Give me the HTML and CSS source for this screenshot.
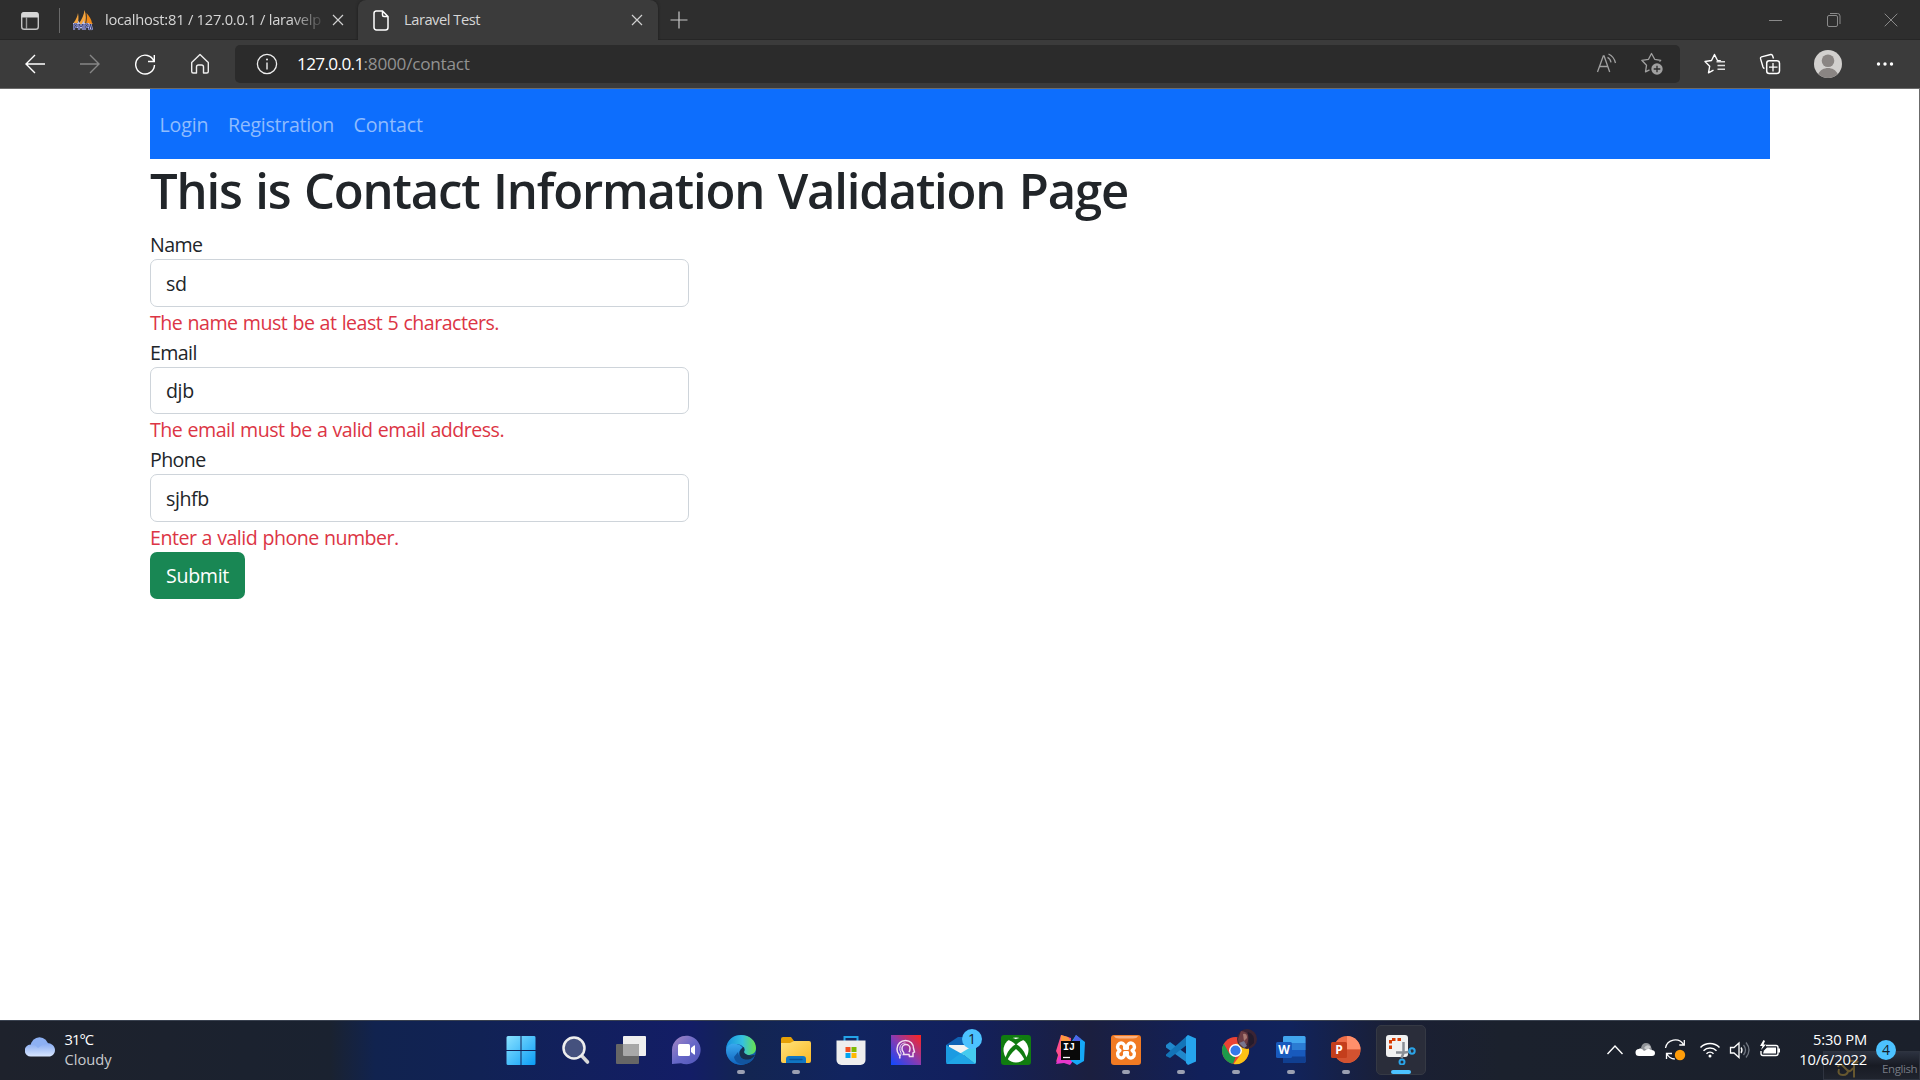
FILE: index.html
```html
<!DOCTYPE html>
<html lang="en">
<head>
<meta charset="utf-8">
<title>Laravel Test</title>
<link rel="stylesheet" href="styles.css">
</head>
<body>
<header class="tabs">
  <div class="tab-menu"><svg width="20" height="20" viewBox="0 0 20 20"><rect x="1.7" y="1.7" width="16.6" height="16.6" rx="2.6" fill="none" stroke="#c4c4c4" stroke-width="1.4"/><path d="M1.5 6.5V4a3 3 0 0 1 3-3h11a3 3 0 0 1 3 3v2.500z" fill="#d6d6d6"/><path d="M6.500 6v12" stroke="#9a9a9a" stroke-width="1.400"/></svg></div>
  <div class="tab tab-idle">
    <svg class="favicon" width="20" height="21" viewBox="0 0 20 21"><path d="M0.500 13C3 10 4.500 6 5 3c.8 4 .6 8-.6 11zM5.500 14C9 9 11 5 11.500 0c2 5 1.500 10 .5 14z" fill="#f5a43c"/><path d="M13 14c1-4 1-8 .5-11 3 3 5 7 5.500 10l1 1z" fill="#f08a18"/><path d="M1 20v-6h3v3H1M6 20v-6l2 3 2-3v6M12 20v-6h3v3h-3M16 20l1.500-6 1.500 6" fill="none" stroke="#bcc0e8" stroke-width="2.200"/><path d="M1 20v-6h3v3H1M6 20v-6l2 3 2-3v6M12 20v-6h3v3h-3M16 20l1.500-6 1.500 6" fill="none" stroke="#303878"/></svg>
    <span class="tab-title faded">localhost:81 / 127.0.0.1 / laravelp</span>
    <svg class="close" width="12" height="12" viewBox="0 0 12 12"><path d="M1 1l10 10M11 1L1 11" stroke="#d0d0d0" stroke-width="1.200"/></svg>
  </div>
  <div class="tab tab-active">
    <svg class="page-icon" width="16" height="21" viewBox="0 0 16 21"><path d="M3 1h6.500L15 6.500V17.500a2.500 2.500 0 0 1-2.500 2.500H3.500A2.500 2.500 0 0 1 1 17.500V3.500A2.500 2.500 0 0 1 3 1zM9.500 1v4a1.500 1.500 0 0 0 1.500 1.500h4" fill="none" stroke="#fff" stroke-width="1.500"/></svg>
    <span class="tab-title active-title">Laravel Test</span>
    <svg class="close" width="12" height="12" viewBox="0 0 12 12"><path d="M1 1l10 10M11 1L1 11" stroke="#d0d0d0" stroke-width="1.200"/></svg>
  </div>
  <svg class="new-tab" width="18" height="18" viewBox="0 0 18 18"><path d="M9 .5v17M.5 9h17" stroke="#c8c8c8" stroke-width="1.200"/></svg>
  <div class="window-controls">
    <svg width="14" height="14" viewBox="0 0 14 14"><path d="M0 7.500h13" stroke="#8a8a8a"/></svg>
    <svg width="14" height="14" viewBox="0 0 14 14"><rect x=".5" y="2.500" width="10" height="11" rx="1.500" fill="none" stroke="#8a8a8a"/><path d="M3 .5h7.500a2.500 2.500 0 0 1 2.500 2.500v8" fill="none" stroke="#8a8a8a"/></svg>
    <svg width="14" height="14" viewBox="0 0 14 14"><path d="M.7.700l12.600 12.600M13.300.700L.7 13.300" stroke="#8a8a8a"/></svg>
  </div>
</header>
<div class="toolbar">
  <div class="nav-buttons">
    <svg width="22" height="22" viewBox="0 0 22 22"><path d="M21 11H2M11 2l-9 9 9 9" fill="none" stroke="#fff" stroke-width="1.400"/></svg>
    <svg width="22" height="22" viewBox="0 0 22 22"><path d="M1 11h19M11 2l9 9-9 9" fill="none" stroke="#868686" stroke-width="1.400"/></svg>
    <svg width="22" height="22" viewBox="0 0 22 22"><path d="M20 8.500A9.400 9.400 0 1 0 20.500 12M20.300 2v6.500H14" fill="none" stroke="#fff" stroke-width="1.400"/></svg>
    <svg width="22" height="22" viewBox="0 0 22 22"><path d="M2.700 9.500L11 1.500l8.300 8V18.500a1.500 1.500 0 0 1-1.500 1.500H14.500v-6a2 2 0 0 0-2-2h-3a2 2 0 0 0-2 2v6H4.200a1.500 1.500 0 0 1-1.500-1.500z" fill="none" stroke="#eee" stroke-width="1.400" stroke-linejoin="round"/></svg>
  </div>
  <div class="address">
    <svg width="22" height="22" viewBox="0 0 22 22"><circle cx="11" cy="11" r="9.600" fill="none" stroke="#eee" stroke-width="1.300"/><path d="M11 9.500v7" stroke="#eee" stroke-width="1.400"/><circle cx="11" cy="6.500" r="1" fill="#eee"/></svg>
    <span class="url"><span class="host">127.0.0.1</span><span class="path">:8000/contact</span></span>
    <svg class="read" width="22" height="22" viewBox="0 0 22 22"><path d="M1.500 19L7.300 3h.8l5.600 16M3.500 13.500h8.300" fill="none" stroke="#a0a0a0" stroke-width="1.300"/><path d="M11.500 4.300q3 1.500 3.500 5M12.500 1q5.500 2.500 7 9" fill="none" stroke="#a0a0a0" stroke-width="1.300"/></svg>
    <svg class="star-add" width="24" height="24" viewBox="0 0 24 24"><path d="M19.500 9.500l1.200-1.200-6-1L11.500 1.500 8.500 7.300l-6.700 1 4.700 5-1 6.500 4-2" fill="none" stroke="#a0a0a0" stroke-width="1.300" stroke-linejoin="round"/><circle cx="17" cy="17" r="5.700" fill="#a0a0a0"/><path d="M17 13.700v6.600M13.700 17h6.600" stroke="#2b2b2b" stroke-width="1.300"/></svg>
  </div>
  <div class="tools">
    <svg width="22" height="22" viewBox="0 0 22 22"><path d="M17 8l-3.500-.5-3-6-3 6-6.500 1 4.700 4.700-1.200 6.600 5-2.700" fill="none" stroke="#fff" stroke-width="1.400" stroke-linejoin="round"/><path d="M12.500 8.800H21M13.500 12.500H21M13.500 16.200H21" stroke="#ddd" stroke-width="1.400"/></svg>
    <svg width="22" height="22" viewBox="0 0 22 22"><path d="M14.500 5.500L13.500 2.500a1.500 1.500 0 0 0-1.800-1L2.500 3.800a1.500 1.500 0 0 0-1 1.800L4 14a2.500 2.500 0 0 0 1.500 1.500" fill="none" stroke="#fff" stroke-width="1.400"/><rect x="7.700" y="7.700" width="12.800" height="12.800" rx="2.500" fill="none" stroke="#fff" stroke-width="1.500"/><path d="M14 10v8.500M10 14.200h8.500" stroke="#fff" stroke-width="1.300"/></svg>
    <svg class="avatar" width="28" height="28" viewBox="0 0 28 28"><circle cx="14" cy="14" r="14" fill="#d2d0ce"/><circle cx="14" cy="10.700" r="6.300" fill="#8a8583"/><path d="M4.300 24C6 20 10 18 14 18s8 2 9.700 6a14 14 0 0 1-19.400 0z" fill="#8a8583"/></svg>
    <svg width="22" height="22" viewBox="0 0 22 22"><g fill="#fff"><circle cx="4.500" cy="11" r="1.700"/><circle cx="11" cy="11" r="1.700"/><circle cx="17.500" cy="11" r="1.700"/></g></svg>
  </div>
</div>
<main class="page">
  <div class="container">
    <nav class="navbar"><a class="login">Login</a><a class="registration">Registration</a><a class="contact">Contact</a></nav>
    <h1>This is Contact Information Validation Page</h1>
    <form>
      <label>Name</label>
      <input type="text" value="sd">
      <p class="error">The name must be at least 5 characters.</p>
      <label>Email</label>
      <input type="text" value="djb">
      <p class="error">The email must be a valid email address.</p>
      <label>Phone</label>
      <input type="text" value="sjhfb">
      <p class="error">Enter a valid phone number.</p>
      <button type="button">Submit</button>
    </form>
  </div>
</main>
<footer class="taskbar">
  <div class="weather">
    <svg width="30" height="20" viewBox="0 0 30 20"><defs><linearGradient id="cl" x1="0" y1="0" x2="0" y2="1"><stop offset="0" stop-color="#86aaf0"/><stop offset="1" stop-color="#d8e6ff"/></linearGradient></defs><circle cx="14.500" cy="9" r="8.700" fill="#8db0f2"/><path d="M6 19.500a6 6 0 0 1-.5-12C9 7 11 9 13 11l4-3c5-4.500 13-1 13 5 0 4-3 6.500-6 6.500z" fill="url(#cl)"/></svg>
    <div class="weather-text"><span class="temp">31°C</span><span class="sky">Cloudy</span></div>
  </div>
  <div class="apps">
    <div class="app"><svg viewBox="0 0 30 30"><defs><linearGradient id="wn" x1="0" y1="0" x2="1" y2="1"><stop offset="0" stop-color="#8ae2ff"/><stop offset="1" stop-color="#0a9cf6"/></linearGradient></defs><path d="M2 1h12.500v14H.5V2.500A1.500 1.500 0 0 1 2 1zM15.500 1H28a1.500 1.500 0 0 1 1.500 1.500V15h-14zM.5 16h14v14H2a1.500 1.500 0 0 1-1.500-1.500zM15.500 16h14v12.500A1.500 1.500 0 0 1 28 30H15.500z" fill="url(#wn)"/></svg></div>
    <div class="app"><svg viewBox="0 0 30 30"><path d="M20 20l6.500 7" stroke="#d8d8d8" stroke-width="3.600" stroke-linecap="round"/><circle cx="13" cy="13" r="10.500" fill="#45517e" stroke="#eee" stroke-width="2.500"/></svg></div>
    <div class="app"><svg viewBox="0 0 30 30"><rect x="7" y="1" width="23" height="20" rx="1" fill="#efefef"/><rect y="9" width="23" height="20" rx="1" fill="#666"/><path d="M7 9h15a1 1 0 0 1 1 1v11H8a1 1 0 0 1-1-1z" fill="#a8a8a8"/></svg></div>
    <div class="app"><svg viewBox="0 0 30 30"><defs><linearGradient id="ch" x1="0" y1="0" x2="1" y2="1"><stop offset="0" stop-color="#a887c2"/><stop offset=".5" stop-color="#6768c8"/><stop offset="1" stop-color="#5054b8"/></linearGradient></defs><path d="M1 29V15A14.300 14.300 0 1 1 10 28.300z" fill="url(#ch)"/><rect x="7" y="9" width="12" height="12" rx="1.500" fill="#fff"/><path d="M20 13l3-2.500q1-.5 1 .5v8q0 1-1 .5L20 17z" fill="#fff"/></svg></div>
    <div class="app run"><svg viewBox="0 0 30 30"><defs><linearGradient id="eg"><stop offset="0" stop-color="#1791e0"/><stop offset=".55" stop-color="#35c1e0"/><stop offset="1" stop-color="#68e34b"/></linearGradient><linearGradient id="eb" x1="0" y1="0" x2="0" y2="1"><stop offset="0" stop-color="#39a8ee"/><stop offset="1" stop-color="#1065c0"/></linearGradient></defs><circle cx="15" cy="15" r="15" fill="#115ba8"/><path d="M0 14C1 4 8 0 15 0c9 0 15 6 15 13 0 5-4 7-8 7-3 0-5-1-4-3 2-4-2-8-8-8-5 0-9 3-10 5z" fill="url(#eg)"/><path d="M0 15c1-5 5-7 9-6 5 0 8 3 7 5-5 1-5 13 3 15C8 32 0 24 0 15z" fill="url(#eb)"/><path d="M18 12c-6 2-6 11 1 13 4 1 8-2 10-5l-1 0c-3 1-9 0-10-3q1-2 0-5z" fill="#17304f"/><path d="M12 17c0 6 7 10 16 6-5 8-18 9-20-1z" fill="#12559f"/></svg></div>
    <div class="app run"><svg viewBox="0 0 30 30"><defs><linearGradient id="fo" x1="0" y1="0" x2="1" y2="1"><stop offset="0" stop-color="#ffe27c"/><stop offset="1" stop-color="#fbb924"/></linearGradient></defs><path d="M0 8V4a2 2 0 0 1 2-2h8l3 4v3z" fill="#e5a007"/><path d="M0 8h9l4-2h15a2 2 0 0 1 2 2v18a2 2 0 0 1-2 2H2a2 2 0 0 1-2-2z" fill="url(#fo)"/><path d="M5 28v-4a3 3 0 0 1 3-3h14a3 3 0 0 1 3 3v4z" fill="#1076c4"/><path d="M9 24.500h12" stroke="#07539a" stroke-width="1.300" stroke-linecap="round"/></svg></div>
    <div class="app"><svg viewBox="0 0 30 30"><path d="M8.500 7V2h13v5" fill="none" stroke="#24a3e8" stroke-width="2"/><path d="M.5 5.500h29V25a5 5 0 0 1-5 5h-19a5 5 0 0 1-5-5z" fill="#eee"/><path d="M9.500 12h5v5h-5z" fill="#f25022"/><path d="M15.500 12h5v5h-5z" fill="#7fba00"/><path d="M9.500 18h5v5h-5z" fill="#00a4ef"/><path d="M15.500 18h5v5h-5z" fill="#ffb900"/></svg></div>
    <div class="app"><svg viewBox="0 0 30 30"><defs><linearGradient id="hd" x1="0" y1="1" x2="1" y2="0"><stop offset="0" stop-color="#0c49ff"/><stop offset=".5" stop-color="#8b3ab0"/><stop offset="1" stop-color="#ff241c"/></linearGradient></defs><path d="M0 0h30v30H0z" fill="url(#hd)"/><path d="M8.500 23.500q1-1.500-.5-4a8 8 0 0 1-2-5.500c0-5 4-8.500 8.500-8.500 5 0 8 3.500 8 8l1 3.500-1.500 1v3.500h-3.500l-.500-2H12.500q1-1.500-.5-3-1-1-1-3a4 4 0 0 1 8 0q0 2-1 3.500" fill="none" stroke="#f3dff0" stroke-width="1.500"/><path d="M9.500 21q1.500-3-.5-5.500c-1-6 3-7.500 5.500-7.500" fill="none" stroke="#f3dff0"/></svg></div>
    <div class="app"><svg viewBox="0 0 30 30"><path d="M0 10L12 2h7l11 8v8H0z" fill="#0f62b4"/><path d="M3 10h25v10H3z" fill="#f2f2f2"/><path d="M0 10l16 9L30 29H2a2 2 0 0 1-2-2z" fill="#1b9be2"/><path d="M30 9v18a2 2 0 0 1-1 1.700L15 18z" fill="#45cbef"/><path d="M0 29h29L15 18z" fill="#20a5e6"/></svg><span class="mail-badge">1</span></div>
    <div class="app"><svg viewBox="0 0 30 30"><rect width="30" height="30" rx="3" fill="#107c10"/><circle cx="15" cy="15" r="12.500" fill="#fff"/><path d="M6 5q4 0 9 5 5-5 9-5-4-3.500-9-.8Q10 1.500 6 5zM12 11q-7 6-7.500 13.500L6 26Q9 19 15 14q6 5 9 12l1.500-1.500Q25 17 18 11l-3-2z" fill="#107c10"/></svg></div>
    <div class="app"><svg viewBox="0 0 30 30"><path d="M0 27l2-7-2-4L5 0l10 3-1 16z" fill="#fd4c8c"/><path d="M5 0l7 2 4 6-12 6z" fill="#ff983f"/><path d="M0 29l3-8 14 5-3 4-6-2z" fill="#e737cb"/><path d="M16 6l4-6 5 4 4 3-1 19-7 4-6-4z" fill="#15a9f7"/><path d="M20 0l5 4-3 6-6-2z" fill="#5063e8"/><rect x="5" y="6" width="19" height="19" fill="#090909"/><path d="M7 22.500h7" stroke="#fff" stroke-width="1.300"/><text x="7" y="15" class="ij">IJ</text></svg></div>
    <div class="app run"><svg viewBox="0 0 30 30"><rect width="30" height="30" rx="3" fill="#f17a23"/><path d="M3 1h24q-1 2.500-5 2.500H8Q4 3.500 3 1z" fill="#f9b283"/><path d="M9 15.500q-3.500-2-2-5.500 2-3 5-1.500 2.500 2 1.500 5h3q-1-3 1.500-5 3-1.500 5 1.500 1.500 3.500-2 5.500 3.500 2 2 5.500-2 3-5 1.500-2.500-2-1.500-5h-3q1 3-1.500 5-3 1.500-5-1.500-1.500-3.500 2-5.500z" fill="none" stroke="#fff" stroke-width="3.200" stroke-linejoin="round"/></svg></div>
    <div class="app run"><svg viewBox="0 0 30 30"><path d="M2 8.500l2-1.500L23 21v8L0 12.500V10z" fill="#2088cc"/><path d="M0 19.500L22 0v9L4 23l-4-2z" fill="#1374b8"/><path d="M22 0l8 3.500v23L22 30l-2-2V2z" fill="#26a4ec"/></svg></div>
    <div class="app run"><svg class="chrome-logo" viewBox="0 0 30 30"><circle cx="15" cy="15" r="14" fill="#ea4335"/><path d="M2.900 8L9 19l6 3-2.500 6.800A14 14 0 0 1 2.900 8z" fill="#1d9b4b"/><path d="M15 8h12a14 14 0 0 1-14 21l7.500-10z" fill="#fbc116"/><circle cx="15" cy="15" r="6.700" fill="#fff"/><circle cx="15" cy="15" r="5.200" fill="#3579eb"/></svg><svg class="profile" viewBox="0 0 20 20"><circle cx="10" cy="10" r="10" fill="#3b2434"/><path d="M4 2q6 0 8 6l-2 7-5 3q-4-3-4-8z" fill="#6d3d44"/><path d="M6 5q4-1 4 4l-3 3z" fill="#a97972"/><path d="M2 14l5-2 3 5-3 2z" fill="#77758f"/><path d="M11 3q7 2 6 11l-5 4z" fill="#241b2c"/></svg></div>
    <div class="app run"><svg viewBox="0 0 30 30"><rect x="7" y="1" width="22.500" height="27" rx="1.500" fill="#185abd"/><path d="M7 8V2.500A1.500 1.500 0 0 1 8.500 1h19.500a1.500 1.500 0 0 1 1.500 1.500V8z" fill="#41a5ee"/><path d="M7 8h22.500v7H7z" fill="#2b7cd3"/><path d="M7 21.500h22.500v5a1.500 1.500 0 0 1-1.500 1.500H8.500A1.500 1.500 0 0 1 7 26.500z" fill="#103f91"/><rect x="0" y="7" width="16" height="16" rx="1.500" fill="#185abd"/><text x="8" y="19" class="office">W</text></svg></div>
    <div class="app run"><svg viewBox="0 0 30 30"><circle cx="16" cy="14.500" r="13.500" fill="#ed6c47"/><path d="M16 1a13.500 13.500 0 0 1 13.500 13.500H16z" fill="#ff8f6b"/><path d="M2.500 14.500h27a13.500 13.500 0 0 1-27 0z" fill="#d35230"/><rect x="0" y="7" width="16" height="16" rx="1.500" fill="#c43e1c"/><text x="8" y="19" class="office">P</text></svg></div>
    <div class="app run current"><svg viewBox="0 0 30 30"><rect x="0" y="0" width="22" height="22" rx="3" fill="#f1f1f1"/><path d="M15 4.500H4.500V15" fill="none" stroke="#d83b01" stroke-width="3" stroke-dasharray="3.500 2"/><path d="M17.500 7v11l-2 5M10 17.500h9l6-1" fill="none" stroke="#8a8f96" stroke-width="2.500"/><circle cx="26" cy="16" r="2.700" fill="none" stroke="#2aa4e8" stroke-width="2"/><circle cx="16" cy="27" r="2.500" fill="none" stroke="#2aa4e8" stroke-width="2"/></svg></div>
  </div>
  <div class="tray">
    <svg width="18" height="20" viewBox="0 0 18 20"><path d="M1.500 14L9 6l7.500 8" fill="none" stroke="#fff" stroke-width="1.400"/></svg>
    <svg width="20" height="20" viewBox="0 0 20 20"><path d="M3 12q0-4 3-4 1-5 5-5t5 4l2 5-8 2z" fill="#8f9297"/><path d="M9 8q3-5 7-1-2 1-3 4z" fill="#c6c8ca"/><path d="M4 16a3.500 3.500 0 0 1 0-7q3-1 5 2l2-1q3-2 5 0 4 0 4 3t-3 3z" fill="#fff"/></svg>
    <svg width="22" height="22" viewBox="0 0 22 22"><path d="M1.500 9C3 0 15-2 19.500 5.500M20.300 1v5h-5M2.500 20v-5.500h5.500M2.800 14.800q2.500 5 8 5.200" fill="none" stroke="#fff" stroke-width="1.300"/><circle cx="16" cy="16" r="5.200" fill="#ff9d0a"/></svg>
    <svg width="22" height="20" viewBox="0 0 22 20"><path d="M1.500 7.500a13.500 13.500 0 0 1 19 0M4.500 10.700a9.200 9.200 0 0 1 13 0M7.500 13.700a5 5 0 0 1 7 0" fill="none" stroke="#fff" stroke-width="1.500"/><circle cx="11" cy="16" r="1.500" fill="#fff"/></svg>
    <svg width="22" height="20" viewBox="0 0 22 20"><path d="M1.500 7.500H5l5-4.500v14.500L5 13H1.500z" fill="none" stroke="#fff" stroke-width="1.300"/><path d="M12 7.500q2 2.700 0 5.500" fill="none" stroke="#fff" stroke-width="1.300"/><path d="M14.500 5q4 5 0 10M17 2.500q6 7.500 0 15" fill="none" stroke="#707680" stroke-width="1.300"/></svg>
    <svg width="22" height="20" viewBox="0 0 22 20"><path d="M7 5.500h10a2 2 0 0 1 2 2v6a2 2 0 0 1-2 2H4a2 2 0 0 1-2-2V11" fill="none" stroke="#fff" stroke-width="1.400"/><path d="M8 7.500h9v6H4l1-3z" fill="#fff"/><path d="M19 8.500h2v4h-2z" fill="#fff"/><path d="M4.500 0L1 6h2.500L2 10l5-5.500H4.500L6 1z" fill="#fff"/></svg>
  </div>
  <div class="clock"><span class="time">5:30 PM</span><span class="date">10/6/2022</span></div>
  <div class="notices">4</div>
  <div class="language"><svg width="24" height="20" viewBox="0 0 24 20"><path d="M13 2.500q5-2 5 1v15M18 4q3 0 4-2M2 8q1-4 4-2 3 3 5 5 3 3 6-2M3 10q-2 6 4 6 5 0 5-5" fill="none" stroke="#66572f" stroke-width="2"/></svg><span>English</span></div>
</footer>
</body>
</html>
```
FILE: styles.css
```css
* { box-sizing: border-box; }
body {
  margin: 0;
  width: 1920px;
  height: 1080px;
  overflow: hidden;
  display: flex;
  flex-direction: column;
  font-family: "Open Sans", "Noto Sans", sans-serif;
  font-size: 19.6px;
  line-height: 30px;
  color: #212529;
  background: #fff;
}
svg { display: block; flex: none; }

/* Browser tab strip */
.tabs {
  height: 40px;
  display: flex;
  align-items: center;
  background: #2e2e2e;
  box-shadow: inset 0 -1px #262626;
  font-size: 14.7px;
  color: #d6d6d6;
}
.tab-menu {
  width: 60px;
  height: 25px;
  padding: 3px 0 0 20px;
  border-right: 1px solid #6a6a6a;
}
.tab { display: flex; align-items: center; height: 40px; }
.tab-idle { width: 298px; padding-left: 13px; }
.tab-active {
  width: 300px;
  padding-left: 15px;
  background: #3b3b3b;
  border-radius: 8px 8px 0 0;
  box-shadow: 0 0 3px #1c1c1c;
}
.tab-title { white-space: nowrap; overflow: hidden; line-height: 24px; padding-bottom: 2px; }
.faded {
  width: 217px;
  margin-left: 12px;
  letter-spacing: -0.24px;
  -webkit-mask-image: linear-gradient(90deg, #000 185px, transparent 222px);
  mask-image: linear-gradient(90deg, #000 185px, transparent 222px);
}
.tab-idle .close { margin-left: 10px; }
.active-title { margin-left: 15px; width: 227px; letter-spacing: -0.47px; }
.new-tab { margin: 0 0 1px 12px; }
.window-controls { margin-left: auto; display: flex; gap: 43.5px; padding: 0 22px 1px 0; }

/* Address toolbar */
.toolbar {
  height: 49px;
  display: flex;
  align-items: center;
  background: #3b3b3b;
  border-bottom: 1px solid #6b6b6b;
}
.nav-buttons { display: flex; gap: 33px; width: 235px; padding-left: 24px; }
.address {
  width: 1445px;
  height: 38px;
  display: flex;
  align-items: center;
  padding: 0 16px 0 21px;
  background: #2b2b2b;
  border-radius: 5px;
}
.url { flex: 1; padding-left: 19px; font-size: 17.2px; white-space: nowrap; }
.host { color: #fff; letter-spacing: -0.66px; }
.path { color: #929292; letter-spacing: -0.25px; }
.star-add { margin-left: 22px; }
.tools { display: flex; align-items: center; gap: 33px; padding-left: 24px; }
.avatar { margin: 0 -1px 0 0; }

/* Page */
.page { height: 931px; border-right: 1px solid #6b6b6b; }
.container { width: 1620px; margin-left: 150px; }
.navbar {
  height: 70px;
  display: flex;
  align-items: center;
  gap: 20px;
  padding: 1px 10px 0 9.5px;
  background: #0d6efd;
  color: #8fbcfe;
}
.login { width: 48.5px; letter-spacing: -0.15px; }
.registration { width: 105.5px; letter-spacing: -0.3px; }
.contact { letter-spacing: -0.13px; }
h1 {
  height: 70px;
  margin: 0;
  padding-top: 1px;
  white-space: nowrap;
  font: 600 49px/60px "Open Sans", sans-serif;
  letter-spacing: -1.17px;
  word-spacing: 2px;
}
form { display: flex; flex-direction: column; width: 539px; }
label { padding-top: 1px; height: 30px; letter-spacing: -0.6px; }
input {
  height: 47.5px;
  padding: 1px 15px 0;
  border: 1px solid #ced4da;
  border-radius: 7px;
  font: inherit;
  color: inherit;
  letter-spacing: -0.4px;
}
.error { margin: 0; padding-top: 1px; height: 30px; color: #dc3545; letter-spacing: -0.5px; word-spacing: 0.6px; }
button {
  align-self: flex-start;
  width: 95px;
  height: 47.5px;
  padding: 1px 0 0;
  border: 0;
  border-radius: 7px;
  background: #198754;
  color: #fff;
  font: inherit;
  letter-spacing: -0.3px;
}

/* Taskbar */
.taskbar {
  position: relative;
  height: 60px;
  display: flex;
  align-items: center;
  padding-bottom: 1px;
  border-top: 1px solid #3a4250;
  background: linear-gradient(90deg, #1e222c 0, #1a2230 330px, #11234f 375px, #112255 480px, #131d66 690px, #132551 745px, #112460 850px, #12205e 960px, #1b1f3f 1090px, #11205a 1200px, #11235c 1290px, #1a1f35 1390px, #1b212d 1500px, #1b202b 1920px);
}
.weather { display: flex; width: 493px; padding-left: 25px; gap: 9.5px; }
.weather svg { margin-top: 8px; }
.weather-text, .clock { display: flex; flex-direction: column; padding-bottom: 3px; font-size: 14.7px; line-height: 20px; color: #fff; }
.temp { letter-spacing: -0.96px; }
.sky { color: #c8cace; }
.apps { display: grid; grid-template-columns: repeat(17, 55px); }
.app { position: relative; height: 50px; display: flex; justify-content: center; align-items: center; }
.app > svg { width: 30px; height: 30px; }
.run::after {
  content: "";
  position: absolute;
  bottom: 1px;
  left: 23.5px;
  width: 8px;
  height: 4px;
  border-radius: 2px;
  background: #9ba0b2;
}
.current { width: 50px; margin-left: 2.5px; border: 1px solid #353944; border-radius: 5px; background: #2a2d3a; }
.current::after { left: 14px; bottom: 0; width: 20px; background: #4cc2ff; }
.mail-badge, .notices {
  border-radius: 50%;
  width: 20px;
  height: 20px;
  background: #4cc2ff;
  color: #14222c;
  font-size: 14px;
  line-height: 19px;
  text-align: center;
}
.mail-badge { position: absolute; top: 4px; left: 29px; }
.app > .profile { position: absolute; width: 20px; height: 20px; top: 4px; left: 29px; }
.app > .chrome-logo { width: 29px; height: 29px; }
.ij { font: bold 10px "Liberation Mono", monospace; fill: #fff; }
.office { font: bold 12px "Open Sans", sans-serif; fill: #fff; text-anchor: middle; }
.tray { display: flex; align-items: center; padding-left: 178px; }
.tray svg:nth-child(2) { margin-left: 11px; }
.tray svg:nth-child(3) { margin-left: 9px; }
.tray svg:nth-child(4) { margin-left: 13px; }
.tray svg:nth-child(5) { margin-left: 8px; }
.tray svg:nth-child(6) { margin-left: 8px; }
.clock { position: relative; z-index: 1; margin-left: auto; align-items: flex-end; }
.time { letter-spacing: -0.13px; }
.date { letter-spacing: -0.2px; }
.notices { position: relative; z-index: 1; margin: 0 24px 0 9px; }
.language {
  position: absolute;
  left: 1823px;
  top: 30px;
  width: 97px;
  height: 29px;
  display: flex;
  align-items: center;
  gap: 22px;
  padding: 6px 0 0 12px;
  background: linear-gradient(#2c3240, #181b24 50%, #20242e);
  border: 1px solid #2f3440;
  color: #777b84;
  font-size: 11.5px;
  letter-spacing: -0.4px;
}
```
